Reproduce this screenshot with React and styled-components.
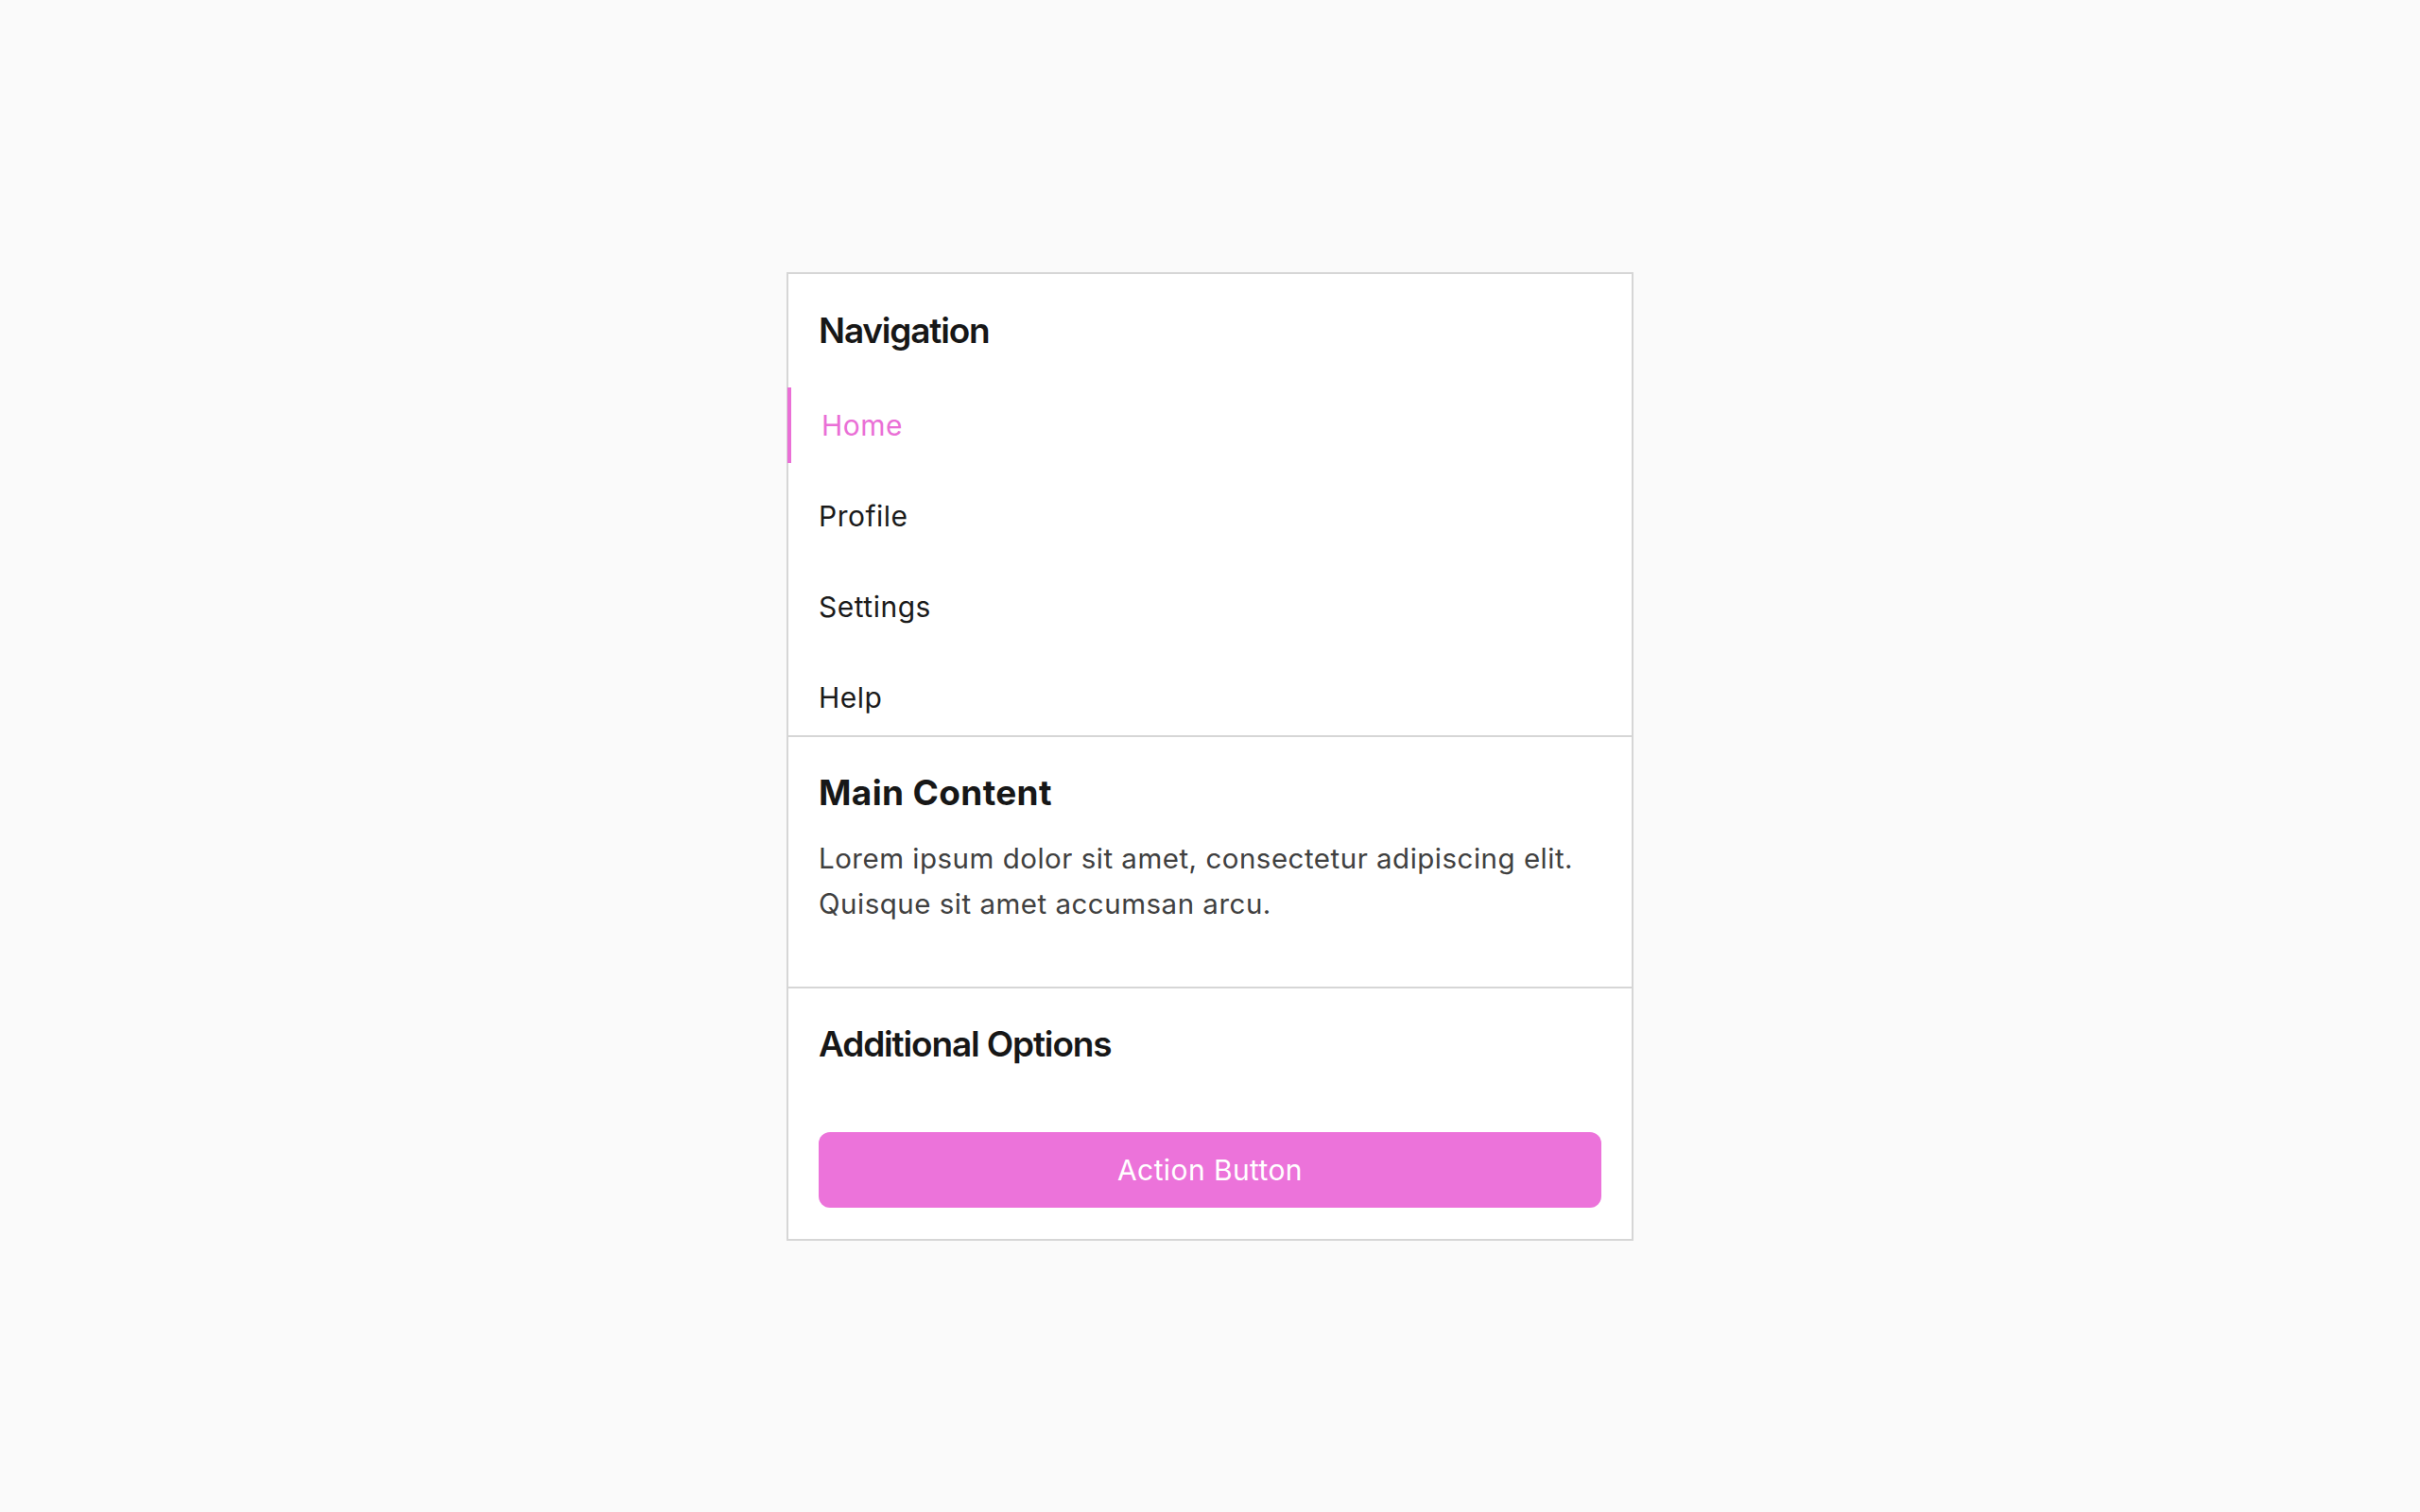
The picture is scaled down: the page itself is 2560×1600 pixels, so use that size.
import React from 'react';
import styled, { createGlobalStyle } from 'styled-components';

const GlobalStyle = createGlobalStyle`
  * { box-sizing: border-box; }
  html, body {
    margin: 0;
    padding: 0;
    background: #fafafa;
    font-family: Inter, "Noto Sans", sans-serif;
    color: #171717;
  }
`;

const Page = styled.div`
  min-height: 100vh;
  display: flex;
  align-items: center;
  justify-content: center;
`;

const Card = styled.div`
  width: 896px;
  background: #ffffff;
  border: 2px solid #d6d6d6;
  display: flex;
  flex-direction: column;
`;

const Section = styled.section`
  padding: ${(p) => p.$pad || '32px'};
  border-bottom: ${(p) => (p.$last ? 'none' : '2px solid #d6d6d6')};
`;

const Heading = styled.h2`
  margin: 0;
  font-size: 37px;
  line-height: 48px;
  font-weight: ${(p) => p.$weight || 600};
  letter-spacing: ${(p) => p.$spacing || '-1.15px'};
  color: #171717;
`;

const NavHeading = styled(Heading)`
  padding: 4px 32px 0;
  margin-bottom: 36px;
`;

const NavList = styled.ul`
  list-style: none;
  margin: 0;
  padding: 0;
  display: flex;
  flex-direction: column;
  gap: 16px;
`;

const NavItem = styled.li`
  height: 80px;
  display: flex;
  align-items: center;
  padding-left: 32px;
  font-size: 30px;
  letter-spacing: 0.5px;
  color: ${(p) => (p.$active ? '#ea6fd6' : '#1a1a1a')};
  border-left: ${(p) => (p.$active ? '4px solid #ea6fd6' : 'none')};
  margin-left: ${(p) => (p.$active ? '-1px' : '0')};
  cursor: pointer;
`;

const Paragraph = styled.p`
  margin: 21px 0 32px;
  font-size: 29.5px;
  line-height: 48px;
  letter-spacing: 0.5px;
  color: #404040;
`;

const ActionButton = styled.button`
  width: 100%;
  height: 80px;
  margin-top: 69px;
  border: none;
  border-radius: 12px;
  background: #ec73da;
  color: #ffffff;
  font-family: inherit;
  font-size: 30px;
  letter-spacing: 0.4px;
  cursor: pointer;
`;

const items = ['Home', 'Profile', 'Settings', 'Help'];

export default function App() {
  return (
    <>
      <GlobalStyle />
      <Page>
        <Card>
          <Section $pad="32px 0 0">
            <NavHeading $spacing="-1.2px">Navigation</NavHeading>
            <NavList>
              {items.map((item, i) => (
                <NavItem key={item} $active={i === 0}>
                  {item}
                </NavItem>
              ))}
            </NavList>
          </Section>
          <Section $pad="35px 32px 32px">
            <Heading $weight={700} $spacing="0.35px">Main Content</Heading>
            <Paragraph>
              Lorem ipsum dolor sit amet, consectetur adipiscing elit. Quisque sit amet accumsan arcu.
            </Paragraph>
          </Section>
          <Section $last $pad="35px 32px 33px">
            <Heading>Additional Options</Heading>
            <ActionButton>Action Button</ActionButton>
          </Section>
        </Card>
      </Page>
    </>
  );
}
